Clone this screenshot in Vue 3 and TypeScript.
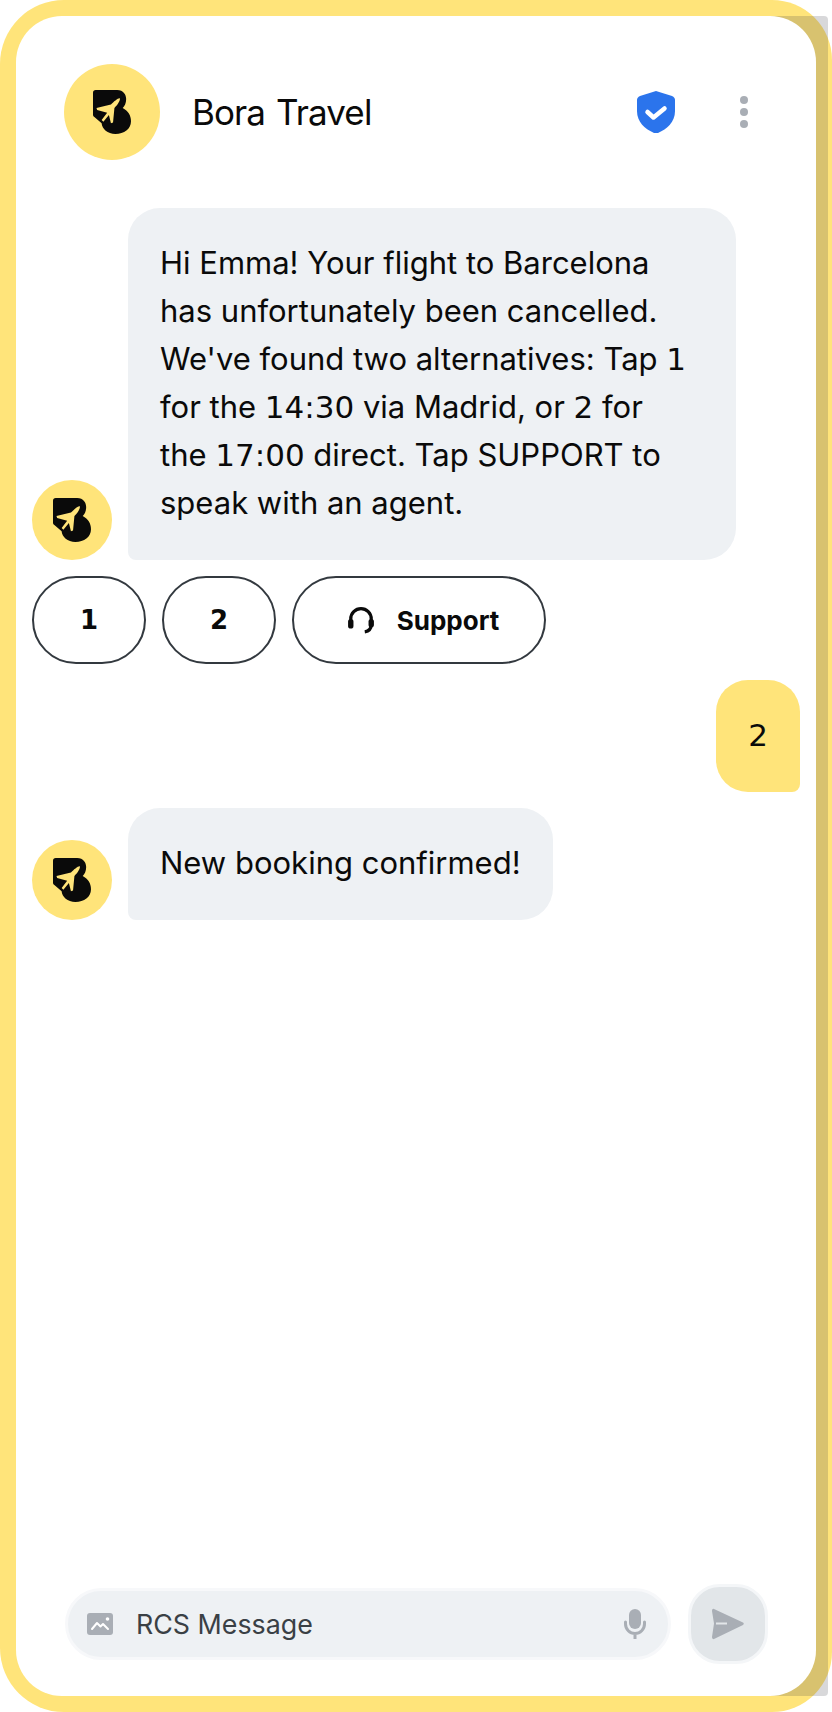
<template>
  <div class="phone">
    <div class="phone-shade"></div>
    <div class="screen">
      <header class="top-bar">
        <div class="avatar avatar-lg">
          <svg class="logo" viewBox="0 0 110 127">
            <path class="logo-b" :d="logoB" />
            <path class="logo-plane" :d="logoPlane" />
          </svg>
        </div>
        <span class="brand">Bora Travel</span>
        <svg class="shield" viewBox="0 0 38 42">
          <path d="M19 0l16 5c2 1 3 2 3 4v11c0 11-8 18-17 22h-4C8 38 0 31 0 20V9c0-2 1-3 3-4z" fill="#2b74ec" />
          <path d="M10.500 21l6 5.500 11-9" fill="none" stroke="#fff" stroke-width="4.500" stroke-linecap="round" stroke-linejoin="round" />
        </svg>
        <div class="dots"><i></i><i></i><i></i></div>
      </header>

      <section class="chat">
        <div class="row">
          <div class="avatar avatar-sm">
            <svg class="logo" viewBox="0 0 110 127">
              <path class="logo-b" :d="logoB" />
              <path class="logo-plane" :d="logoPlane" />
            </svg>
          </div>
          <p class="bubble bubble-in wide">
            Hi Emma! Your flight to Barcelona has unfortunately been cancelled. We've found two alternatives: Tap <span class="num">1</span> for the <span class="num">14:30</span> via Madrid, or <span class="num">2</span> for the <span class="num">17:00</span> direct. Tap SUPPORT to speak with an agent.
          </p>
        </div>

        <div class="chips">
          <button class="chip chip-num" v-for="n in numbers" :key="n">{{ n }}</button>
          <button class="chip chip-support">
            <svg class="headset" viewBox="0 0 26 26">
              <path d="M3.500 17v-5a9.500 9.500 0 0 1 19 0v5c0 4-2.500 6.500-6 7" fill="none" stroke="#0a0a0a" stroke-width="3" />
              <rect x="1" y="12" width="5" height="9" rx="2.500" fill="#0a0a0a" />
              <rect x="20" y="12" width="5" height="8" rx="2.500" fill="#0a0a0a" />
            </svg>
            Support
          </button>
        </div>

        <div class="row row-out">
          <p class="bubble bubble-out"><span class="num">2</span></p>
        </div>

        <div class="row">
          <div class="avatar avatar-sm">
            <svg class="logo" viewBox="0 0 110 127">
              <path class="logo-b" :d="logoB" />
              <path class="logo-plane" :d="logoPlane" />
            </svg>
          </div>
          <p class="bubble bubble-in">New booking confirmed!</p>
        </div>
      </section>

      <footer class="composer">
        <div class="input">
          <svg class="pic" viewBox="0 0 26 22">
            <rect width="26" height="22" rx="3" fill="#a9aeb5" />
            <path d="M5 16l5-6 3.500 3.500 2.500-2.500 5 5" fill="none" stroke="#fff" stroke-width="2" stroke-linecap="round" stroke-linejoin="round" />
            <circle cx="20.500" cy="6" r="1.800" fill="#fff" />
          </svg>
          <span class="placeholder">RCS Message</span>
          <svg class="mic" viewBox="0 0 22 30">
            <rect x="5" y="0" width="12" height="20" rx="6" fill="#a9aeb5" />
            <path d="M1.500 13v2a9.500 9.500 0 0 0 19 0v-2M11 24.500V30" fill="none" stroke="#a9aeb5" stroke-width="3" stroke-linecap="round" />
          </svg>
        </div>
        <button class="send">
          <svg viewBox="0 0 32 32" width="32" height="32">
            <path d="M2 1C1 .5 0 1.500 0 3l2 12.500L0 29c0 1.500 1 2.500 2 2l29-14c1-1 1-2 0-2.500z" fill="#a9aeb5" />
            <path d="M4 15.500h11" stroke="#e2e6e9" stroke-width="2" />
          </svg>
        </button>
      </footer>
    </div>
  </div>
</template>

<script setup lang="ts">
const numbers: number[] = [1, 2];

// logo is shared by the header and the message avatars
const logoB =
  "M8 0H70C88 0 96 14 96 26C96 38 92 46 86 52C102 60 110 74 110 90C110 112 90 127 65 127C42 127 26 112 25 96L4 78C1 76 0 74 0 70V8C0 3 3 0 8 0Z";
const logoPlane =
  "M78 24C79 32 70 44 62 52L58 94L52 96L46 72L30 92L25 87L41 66L12 58L10 52L52 42C60 34 72 23 78 24Z";
</script>

<style>
html,
body {
  margin: 0;
  background: #fff;
}
</style>

<style scoped>
.phone {
  position: relative;
  box-sizing: border-box;
  width: 832px;
  height: 1712px;
  padding: 16px;
  background: #ffe47a;
  border-radius: 64px 60px 60px 64px;
  font-family: Inter, "Liberation Sans", sans-serif;
  color: #0a0a0a;
}

.phone-shade {
  position: absolute;
  top: 16px;
  right: 4px;
  bottom: 16px;
  width: 120px;
  border-radius: 0 4px 4px 0;
  background: rgba(60, 60, 70, 0.2);
}

.screen {
  position: relative;
  box-sizing: border-box;
  width: 800px;
  height: 1680px;
  display: flex;
  flex-direction: column;
  background: #fff;
  border-radius: 46px;
}

.top-bar {
  display: flex;
  align-items: center;
  padding: 48px 0 0 48px;
}

.avatar {
  flex: none;
  display: flex;
  align-items: center;
  justify-content: center;
  border-radius: 50%;
  background: #ffe47a;
}

.avatar-lg {
  width: 96px;
  height: 96px;
}

.avatar-sm {
  width: 80px;
  height: 80px;
  align-self: flex-end;
}

.logo {
  width: 38px;
  height: 44px;
}

.logo-b {
  fill: #0a0a0a;
}

.logo-plane {
  fill: #ffe47a;
}

.brand {
  margin-left: 32px;
  font-size: 35px;
  letter-spacing: -0.9px;
  word-spacing: 2px;
}

.shield {
  width: 38px;
  height: 42px;
  margin-left: auto;
}

.dots {
  display: flex;
  flex-direction: column;
  gap: 4px;
  margin: 0 68px 0 65px;
}

.dots i {
  display: block;
  width: 8px;
  height: 8px;
  border-radius: 50%;
  background: #a9aeb5;
}

.chat {
  display: flex;
  flex-direction: column;
  gap: 16px;
  margin-top: 48px;
  padding: 0 16px;
}

.row {
  display: flex;
  gap: 16px;
}

.row-out {
  justify-content: flex-end;
}

.bubble {
  margin: 0;
  padding: 31px 32px 33px;
  font-size: 31px;
  line-height: 48px;
}

.bubble-in {
  background: #eef1f4;
  border-radius: 32px 32px 32px 8px;
}

.wide {
  width: 608px;
  box-sizing: border-box;
  padding-right: 44px;
}

.bubble-out {
  background: #ffe47a;
  border-radius: 32px 32px 8px 32px;
}

.num {
  font-family: "DejaVu Sans", sans-serif;
  line-height: 0;
}

.chips {
  display: flex;
  gap: 16px;
}

.chip {
  height: 88px;
  display: flex;
  align-items: center;
  justify-content: center;
  background: #fff;
  border: 2px solid #33393f;
  border-radius: 44px;
  color: #0a0a0a;
  font-family: inherit;
  font-weight: 700;
  font-size: 26px;
}

.chip-num {
  width: 114px;
  font-family: "DejaVu Sans", sans-serif;
}

.chip-support {
  width: 254px;
  gap: 22px;
  padding-left: 14px;
}

.headset {
  width: 28px;
  height: 28px;
}

.composer {
  display: flex;
  align-items: center;
  gap: 17px;
  margin-top: auto;
  padding: 0 48px 32px 49px;
}

.input {
  flex: 1;
  height: 72px;
  display: flex;
  align-items: center;
  box-sizing: border-box;
  padding: 0 22px 0 19px;
  background: #eef1f4;
  border: 3px solid #f7f8fa;
  border-radius: 36px;
}

.pic {
  width: 26px;
  height: 22px;
}

.placeholder {
  margin-left: 23px;
  font-size: 26.800px;
  color: #3a4045;
}

.mic {
  width: 22px;
  height: 30px;
  margin-left: auto;
}

.send {
  width: 80px;
  height: 80px;
  display: flex;
  align-items: center;
  justify-content: center;
  padding: 0;
  background: #e2e6e9;
  border: 3px solid #f4f6f8;
  border-radius: 32px;
}
</style>
